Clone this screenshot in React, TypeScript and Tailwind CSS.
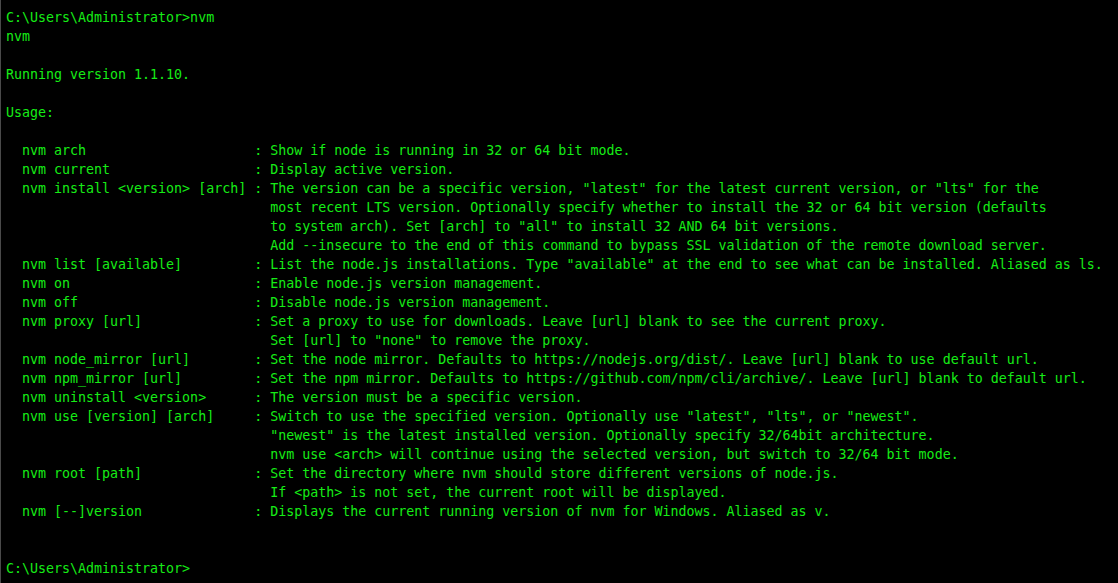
const LINES = [
  "C:\\Users\\Administrator>nvm",
  "nvm",
  "",
  "Running version 1.1.10.",
  "",
  "Usage:",
  "",
  "  nvm arch                     : Show if node is running in 32 or 64 bit mode.",
  "  nvm current                  : Display active version.",
  "  nvm install <version> [arch] : The version can be a specific version, \"latest\" for the latest current version, or \"lts\" for the",
  "                                 most recent LTS version. Optionally specify whether to install the 32 or 64 bit version (defaults",
  "                                 to system arch). Set [arch] to \"all\" to install 32 AND 64 bit versions.",
  "                                 Add --insecure to the end of this command to bypass SSL validation of the remote download server.",
  "  nvm list [available]         : List the node.js installations. Type \"available\" at the end to see what can be installed. Aliased as ls.",
  "  nvm on                       : Enable node.js version management.",
  "  nvm off                      : Disable node.js version management.",
  "  nvm proxy [url]              : Set a proxy to use for downloads. Leave [url] blank to see the current proxy.",
  "                                 Set [url] to \"none\" to remove the proxy.",
  "  nvm node_mirror [url]        : Set the node mirror. Defaults to https://nodejs.org/dist/. Leave [url] blank to use default url.",
  "  nvm npm_mirror [url]         : Set the npm mirror. Defaults to https://github.com/npm/cli/archive/. Leave [url] blank to default url.",
  "  nvm uninstall <version>      : The version must be a specific version.",
  "  nvm use [version] [arch]     : Switch to use the specified version. Optionally use \"latest\", \"lts\", or \"newest\".",
  "                                 \"newest\" is the latest installed version. Optionally specify 32/64bit architecture.",
  "                                 nvm use <arch> will continue using the selected version, but switch to 32/64 bit mode.",
  "  nvm root [path]              : Set the directory where nvm should store different versions of node.js.",
  "                                 If <path> is not set, the current root will be displayed.",
  "  nvm [--]version              : Displays the current running version of nvm for Windows. Aliased as v.",
  "",
  "",
  "C:\\Users\\Administrator>",
];

export default function App() {
  return (
    <div className="w-[1118px] h-[583px] bg-black border-l border-[#4a4a4a] overflow-hidden">
      <pre className="pt-[8px] pl-[5px] m-0 text-[13.3px] leading-[19px] text-[#16ec16] font-['DejaVu_Sans_Mono',monospace] whitespace-pre">
        {LINES.map((line, i) => (
          <div key={i} className="h-[19px]">
            {line}
          </div>
        ))}
      </pre>
    </div>
  );
}
